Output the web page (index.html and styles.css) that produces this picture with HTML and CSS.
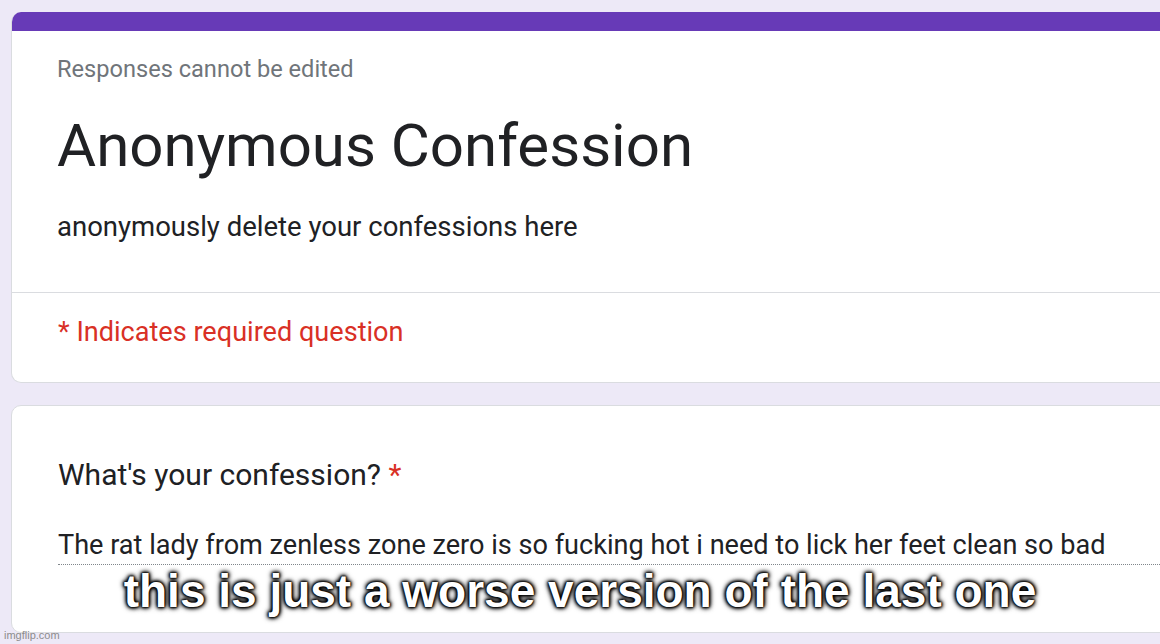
FILE: index.html
```html
<!DOCTYPE html>
<html>
<head>
<meta charset="utf-8">
<link rel="stylesheet" href="styles.css">
</head>
<body>
<div class="page">
  <section class="card header-card">
    <div class="accent"></div>
    <div class="header-main">
      <p class="notice">Responses cannot be edited</p>
      <h1 class="title">Anonymous Confession</h1>
      <p class="desc">anonymously delete your confessions here</p>
    </div>
    <div class="header-foot">
      <p class="required">* Indicates required question</p>
    </div>
  </section>
  <section class="card question-card">
    <p class="question">What's your confession? <span class="star">*</span></p>
    <div class="answer">The rat lady from zenless zone zero is so fucking hot i need to lick her feet clean so bad</div>
  </section>
</div>
<div class="caption">this is just a worse version of the last one</div>
<div class="watermark">imgflip.com</div>
</body>
</html>
```

FILE: styles.css
```css
html, body {
  margin: 0;
  padding: 0;
  overflow: hidden;
  width: 1160px;
  height: 644px;
}
body {
  background: #ede9f7;
  font-family: Roboto, "Noto Sans", sans-serif;
  color: #202124;
  position: relative;
}
.page {
  padding: 12px 0 0 11px;
  width: 1240px;
}
.card {
  background: #fff;
  border: 1px solid #dadce0;
  border-radius: 10px;
  overflow: hidden;
}
.header-card {
  border-top: none;
}
.accent {
  height: 19px;
  background: #673ab7;
}
.header-main {
  padding: 22px 0 47px 45px;
  border-bottom: 1px solid #dadce0;
}
.notice {
  margin: 0;
  font-size: 23.6px;
  line-height: 32px;
  color: #70757a;
}
.title {
  margin: 25px 0 0;
  font-weight: 400;
  font-size: 60px;
  line-height: 72px;
  color: #202124;
}
.desc {
  margin: 27px 0 0;
  font-size: 27.5px;
  line-height: 36px;
}
.header-foot {
  padding: 21px 0 32px 46px;
}
.required {
  margin: 0;
  font-size: 27.1px;
  line-height: 36px;
  color: #d93025;
}
.question-card {
  margin-top: 22px;
  padding: 49px 0 67px 46px;
}
.question {
  margin: 0;
  font-size: 30px;
  line-height: 40px;
}
.star {
  color: #d93025;
}
.answer {
  margin-top: 32px;
  font-size: 27.1px;
  line-height: 36px;
  padding-bottom: 1px;
  border-bottom: 1px dotted #80868b;
  white-space: nowrap;
}
.caption {
  position: absolute;
  left: 0;
  top: 569px;
  width: 1160px;
  text-align: center;
  font-family: "Liberation Sans", Arial, sans-serif;
  font-weight: 700;
  font-size: 46px;
  line-height: 45px;
  color: #fff;
  text-shadow: 0 0 1px #000, 0 0 2px #000, 0 0 3px #000, 0 0 4px #000, 0 0 5px #000, 0 0 6px #000;
}
.watermark {
  position: absolute;
  left: 4px;
  bottom: 2px;
  font-family: "Liberation Sans", Arial, sans-serif;
  font-size: 11px;
  line-height: 13px;
  color: #8c8c8c;
}
```
